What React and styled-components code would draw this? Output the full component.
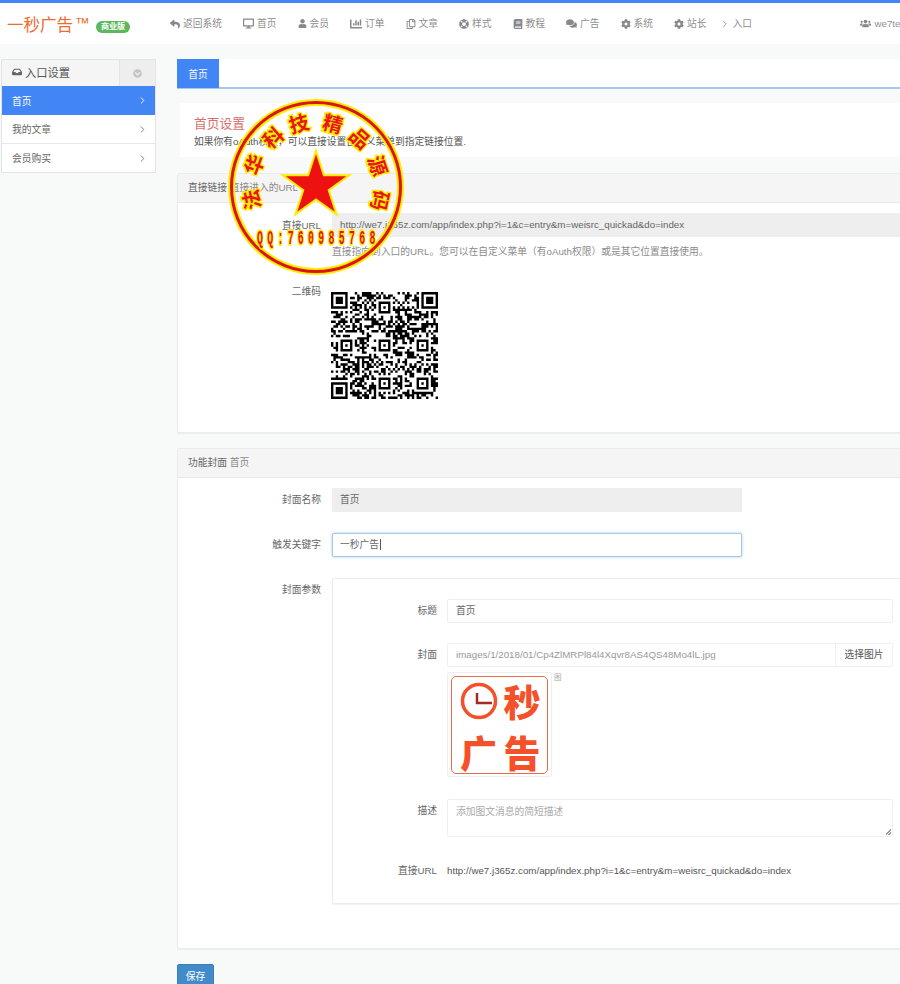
import React from 'react'
import styled, { createGlobalStyle } from 'styled-components'
import {
    FaReply, FaDesktop, FaUser, FaChartBar, FaRegCopy, FaLifeRing, FaBook, FaComments,
    FaCog, FaUsers, FaInbox, FaChevronCircleDown,
} from 'react-icons/fa'
import { FiChevronRight } from 'react-icons/fi'

const Global = createGlobalStyle`
    html, body { margin: 0; padding: 0; background: #f8f9f9; overflow: hidden; }
    body { font-family: "Liberation Sans", "Noto Sans CJK SC", sans-serif; font-size: 9.75px; color: #666; }
    * { box-sizing: border-box; }
`

const Page = styled.div`
    position: relative;
    width: 900px;
    height: 984px;
    overflow: hidden;
    border-top: 3px solid #4285f4;
`

const Header = styled.div`
    display: flex;
    align-items: center;
    width: 940px;
    height: 41px;
    padding: 0 26px 0 7px;
    background: #fff;
`

const Brand = styled.a`
    display: flex;
    align-items: center;
    width: 163px;
    color: #ee6a2c;
    font-size: 16.5px;
    sup { font-size: 15px; line-height: 1; margin: -3px 0 0 2px; }
`

const Badge = styled.span`
    margin: 7px 0 0 6px;
    padding: 1px 5px;
    border-radius: 7px;
    background: #5cb85c;
    color: #fff;
    font-size: 8px;
    font-weight: 700;
    line-height: 10px;
`

const NavItem = styled.a`
    display: flex;
    align-items: center;
    gap: 3px;
    margin-right: 21px;
    color: #8f8f8f;
    line-height: 14px;
    svg {
        color: #888;
        font-size: ${p => p.$icon || 10}px;
        margin-left: ${p => p.$pull || 0}px;
    }
`

const UserLink = styled(NavItem)`
    margin: 0 0 0 auto;
`

const Body = styled.div`
    display: flex;
    align-items: flex-start;
    width: 1000px;
    padding: 15px 0 0 1px;
`

const Side = styled.div`
    flex: none;
    width: 155px;
    margin-right: 21px;
    border: 1px solid #e4e4e4;
    border-top: 0;
    background: #fff;
`

const SideHead = styled.div`
    display: flex;
    height: 27px;
    background: #f5f5f5;
    border-top: 1px solid #e4e4e4;
`

const SideTitle = styled.div`
    flex: 1;
    display: flex;
    align-items: center;
    gap: 3px;
    padding: 0 0 2px 10px;
    color: #555;
    font-size: 11.25px;
    border-right: 1px solid #e4e4e4;
    svg { font-size: 10px; color: #666; }
`

const SideToggle = styled.div`
    display: flex;
    align-items: center;
    justify-content: center;
    width: 35px;
    background: #eee;
    color: #c4c4c4;
    font-size: 9px;
`

const SideItem = styled.a`
    display: flex;
    align-items: center;
    justify-content: space-between;
    height: ${p => (p.$last ? 28 : 29)}px;
    padding: 0 7px 0 10px;
    color: ${p => (p.$active ? '#fff' : '#666')};
    background: ${p => (p.$active ? '#4285f4' : '#fff')};
    border-bottom: ${p => (p.$last || p.$active ? '0' : '1px solid #e8e8e8')};
    svg { font-size: 11px; color: ${p => (p.$active ? '#fff' : '#777')}; }
`

const Main = styled.div`
    flex: 1;
    min-width: 0;
`

const Tabs = styled.div`
    display: flex;
    height: 30px;
    background: #fff;
    border-bottom: 2px solid #a9c7ea;
`

const Tab = styled.a`
    display: flex;
    align-items: center;
    justify-content: center;
    width: 42px;
    height: 29px;
    background: #4285f4;
    color: #fff;
`

const Notice = styled.div`
    height: 54px;
    margin: 14px 0 16px 3px;
    padding: 13px 14px 0;
    background: #fff;
`

const NoticeTitle = styled.div`
    color: #d9706c;
    font-size: 12.75px;
    line-height: 15px;
`

const NoticeText = styled.div`
    margin-top: 4px;
    color: #555;
    line-height: 14px;
`

const Panel = styled.div`
    height: ${p => p.$height}px;
    margin-bottom: 15px;
    background: #fff;
    border: 1px solid #ececec;
    border-radius: 2px;
    box-shadow: 0 1px 1px rgba(0, 0, 0, .05);
`

const PanelHead = styled.div`
    height: ${p => p.$height}px;
    padding-left: 10px;
    line-height: ${p => p.$height - 2}px;
    background: #f5f5f5;
    border-bottom: 1px solid #e8e8e8;
    color: #666;
    span { color: #888; }
`

const PanelBody = styled.div`
    padding-top: 10px;
`

const Row = styled.div`
    display: grid;
    grid-template-columns: ${p => p.$label || 143}px 1fr;
    column-gap: ${p => p.$gap || 11}px;
    margin-bottom: ${p => p.$after || 0}px;
`

const Label = styled.div`
    padding-top: ${p => p.$top || 5}px;
    text-align: right;
    color: #666;
    line-height: 14px;
`

const Plain = styled.div`
    padding-left: 8px;
    height: 24px;
    line-height: 24px;
    background: #eee;
    color: #666;
    width: ${p => (p.$width ? `${p.$width}px` : 'auto')};
`

const Help = styled.div`
    margin-top: 8px;
    color: #8c8c8c;
    line-height: 14px;
`

const QrWrap = styled.div`
    margin: 33px 0 0 -1px;
    line-height: 0;
`

const FocusField = styled(Plain)`
    background: #fff;
    border: 1px solid #a7c6ee;
    border-radius: 2px;
    box-shadow: 0 0 3px rgba(102, 175, 233, .6);
    line-height: 22px;
    padding-left: 7px;
`

const Caret = styled.span`
    display: inline-block;
    width: 1px;
    height: 11px;
    margin-left: 1px;
    vertical-align: -2px;
    background: #555;
`

const ParamBox = styled.div`
    height: 326px;
    padding: 20px 0 0;
    border: 1px solid #ececec;
    border-radius: 2px;
    box-shadow: 0 1px 1px rgba(0, 0, 0, .05);
`

const InnerCol = styled.div`
    width: 446px;
`

const Input = styled.div`
    height: 24px;
    padding-left: 8px;
    line-height: 22px;
    border: 1px solid #efefef;
    border-radius: 2px;
    color: #666;
`

const InputGroup = styled.div`
    display: flex;
    height: 24px;
    border: 1px solid #efefef;
    border-radius: 2px;
`

const GroupText = styled.div`
    flex: 1;
    padding-left: 8px;
    line-height: 22px;
    color: #999;
`

const GroupButton = styled.div`
    width: 57px;
    text-align: center;
    line-height: 22px;
    color: #555;
    border-left: 1px solid #efefef;
`

const ThumbRow = styled.div`
    display: flex;
    align-items: flex-start;
    margin-top: 5px;
`

const Thumb = styled.div`
    width: 105px;
    height: 105px;
    padding: 3px;
    border: 1px solid #efefef;
    border-radius: 2px;
    background: #fff;
`

const ThumbClose = styled.span`
    margin: 2px 0 0 2px;
    color: #aaa;
    font-size: 7.5px;
    line-height: 8px;
`

const Logo = styled.div`
    display: grid;
    grid-template-columns: 53px 34px;
    grid-template-rows: 48px 48px;
    row-gap: 3px;
    place-items: center;
    width: 97px;
    height: 98px;
    border: 1px solid #ec6a4c;
    border-radius: 5px;
    color: #f4512a;
    font-family: "Noto Sans CJK SC", sans-serif;
    font-size: 37px;
    font-weight: 900;
    line-height: 1;
`

const TextArea = styled.div`
    position: relative;
    height: 38px;
    padding: 5px 8px;
    border: 1px solid #efefef;
    border-radius: 2px;
    color: #aaa;
    line-height: 14px;
`

const Grip = styled.i`
    position: absolute;
    right: 1px;
    bottom: 1px;
    width: 6px;
    height: 6px;
    background: linear-gradient(135deg, transparent 50%, #999 50%, #999 60%, transparent 60%, transparent 75%, #999 75%, #999 85%, transparent 85%);
`

const LinkText = styled.div`
    padding-top: 5px;
    color: #555;
    line-height: 14px;
`

const SaveButton = styled.button`
    display: block;
    width: 37px;
    height: 24px;
    padding: 0;
    border: 1px solid #357ebd;
    border-radius: 2px;
    background: #428bca;
    color: #fff;
    font: inherit;
`

const SealSvg = styled.svg`
    position: absolute;
    left: 226px;
    top: 94px;
    pointer-events: none;
`

const SealChar = styled.text`
    font-family: "Noto Sans CJK SC", sans-serif;
    font-size: 20px;
    font-weight: 700;
    fill: #e8141c;
    stroke: #ffec00;
    stroke-width: 3px;
    paint-order: stroke;
    text-anchor: middle;
`

const SealNumber = styled.text`
    font-family: "Liberation Mono", monospace;
    font-size: 14px;
    font-weight: 700;
    fill: #e8141c;
    stroke: #ffec00;
    stroke-width: 2.5px;
    paint-order: stroke;
`

const navItems = [
    [FaReply, '返回系统'], [FaDesktop, '首页', 11], [FaUser, '会员', 9], [FaChartBar, '订单', 12],
    [FaRegCopy, '文章'], [FaLifeRing, '样式'], [FaBook, '教程'], [FaComments, '广告', 11],
    [FaCog, '系统'], [FaCog, '站长'], [FiChevronRight, '入口', 10, -8],
]

const sealChars = [['法', -101], ['华', -70], ['科', -41], ['技', -15], ['精', 15], ['品', 42], ['源', 71], ['码', 102]]

// 45 modules, same grid as a version 7 code
function qrPath() {
    const n = 45
    let seed = 20180117
    const grid = []
    for (let y = 0; y < n; y++) {
        grid.push([])
        for (let x = 0; x < n; x++) {
            seed = (seed * 1103515245 + 12345) & 0x7fffffff
            grid[y].push((seed >> 16) % 100 < 50)
        }
    }
    for (let i = 0; i < n; i++) {
        grid[6][i] = i % 2 === 0
        grid[i][6] = i % 2 === 0
    }
    const stamp = (cx, cy, r) => {
        for (let y = -r - 1; y <= r + 1; y++) {
            for (let x = -r - 1; x <= r + 1; x++) {
                const px = cx + x
                const py = cy + y
                if (px < 0 || py < 0 || px >= n || py >= n) continue
                const d = Math.max(Math.abs(x), Math.abs(y))
                grid[py][px] = d === r || (r === 3 ? d <= 1 : d === 0)
            }
        }
    }
    stamp(3, 3, 3)
    stamp(41, 3, 3)
    stamp(3, 41, 3)
    ;[[6, 22], [22, 6], [22, 22], [38, 22], [22, 38], [38, 38]].forEach(([x, y]) => stamp(x, y, 2))
    let d = ''
    grid.forEach((row, y) => row.forEach((on, x) => {
        if (on) d += `M${x} ${y}h1v1h-1z`
    }))
    return d
}

function QrCode() {
    return (
        <svg width="107" height="107" viewBox="0 0 45 45">
            <path d={qrPath()} fill="#000" />
        </svg>
    )
}

function starPoints(cx, cy, R) {
    const pts = []
    for (let i = 0; i < 10; i++) {
        const r = i % 2 ? R * 0.382 : R
        const a = (i * 36 - 90) * Math.PI / 180
        pts.push(`${cx + r * Math.cos(a)},${cy + r * Math.sin(a)}`)
    }
    return pts.join(' ')
}

function Seal() {
    const c = 90
    return (
        <SealSvg width="180" height="180" viewBox="0 0 180 180">
            <circle cx={c} cy={c} r="84.5" fill="none" stroke="#ffec00" strokeWidth="7" />
            <circle cx={c} cy={c} r="84.5" fill="none" stroke="#d9141c" strokeWidth="3" />
            <polygon points={starPoints(c, c - 1, 35)} fill="#ee1111" stroke="#ffec00" strokeWidth="2" />
            {sealChars.map(([ch, angle]) => {
                const a = (angle - 90) * Math.PI / 180
                const x = c + 65 * Math.cos(a)
                const y = c + 65 * Math.sin(a)
                return (
                    <SealChar key={ch} transform={`translate(${x} ${y}) rotate(${angle})`} y="7">
                        {ch}
                    </SealChar>
                )
            })}
            <SealNumber
                x="0"
                y="0"
                textLength="169"
                lengthAdjust="spacing"
                transform="translate(31 147) scale(.7 1.5)"
            >
                QQ:760985768
            </SealNumber>
        </SealSvg>
    )
}

function CoverLogo() {
    return (
        <Logo>
            <svg width="38" height="38" viewBox="0 0 38 38">
                <circle cx="19" cy="19" r="16.5" fill="none" stroke="#f4512a" strokeWidth="3.5" />
                <path d="M17 11v10h15" fill="none" stroke="#a52a20" strokeWidth="2.5" />
            </svg>
            <span>秒</span>
            <span>广</span>
            <span>告</span>
        </Logo>
    )
}

function App() {
    return (
        <Page>
            <Global />
            <Header>
                <Brand>
                    一秒广告<sup>™</sup>
                    <Badge>商业版</Badge>
                </Brand>
                {navItems.map(([Icon, text, size, pull]) => (
                    <NavItem key={text} $icon={size} $pull={pull}>
                        <Icon />
                        {text}
                    </NavItem>
                ))}
                <UserLink $icon={11}>
                    <FaUsers />
                    we7team
                </UserLink>
            </Header>
            <Body>
                <Side>
                    <SideHead>
                        <SideTitle>
                            <FaInbox />
                            入口设置
                        </SideTitle>
                        <SideToggle><FaChevronCircleDown /></SideToggle>
                    </SideHead>
                    <SideItem $active>首页<FiChevronRight /></SideItem>
                    <SideItem>我的文章<FiChevronRight /></SideItem>
                    <SideItem $last>会员购买<FiChevronRight /></SideItem>
                </Side>
                <Main>
                    <Tabs><Tab>首页</Tab></Tabs>
                    <Notice>
                        <NoticeTitle>首页设置</NoticeTitle>
                        <NoticeText>如果你有oAuth权限，可以直接设置自定义菜单到指定链接位置.</NoticeText>
                    </Notice>
                    <Panel $height={260}>
                        <PanelHead $height={29}>直接链接 <span>直接进入的URL</span></PanelHead>
                        <PanelBody>
                            <Row>
                                <Label $top={6}>直接URL</Label>
                                <div>
                                    <Plain>http://we7.j365z.com/app/index.php?i=1&amp;c=entry&amp;m=weisrc_quickad&amp;do=index</Plain>
                                    <Help>直接指向到入口的URL。您可以在自定义菜单（有oAuth权限）或是其它位置直接使用。</Help>
                                </div>
                            </Row>
                            <Row>
                                <Label $top={26}>二维码</Label>
                                <QrWrap>
                                    <QrCode />
                                </QrWrap>
                            </Row>
                        </PanelBody>
                    </Panel>
                    <Panel $height={501}>
                        <PanelHead $height={29}>功能封面 <span>首页</span></PanelHead>
                        <PanelBody>
                            <Row $after={21}>
                                <Label>封面名称</Label>
                                <Plain $width={410}>首页</Plain>
                            </Row>
                            <Row $after={21}>
                                <Label>触发关键字</Label>
                                <FocusField $width={410}>一秒广告<Caret /></FocusField>
                            </Row>
                            <Row>
                                <Label>封面参数</Label>
                                <ParamBox>
                                    <Row $label={104} $gap={10} $after={20}>
                                        <Label>标题</Label>
                                        <InnerCol><Input>首页</Input></InnerCol>
                                    </Row>
                                    <Row $label={104} $gap={10} $after={22}>
                                        <Label>封面</Label>
                                        <InnerCol>
                                            <InputGroup>
                                                <GroupText>images/1/2018/01/Cp4ZlMRPl84l4Xqvr8AS4QS48Mo4lL.jpg</GroupText>
                                                <GroupButton>选择图片</GroupButton>
                                            </InputGroup>
                                            <ThumbRow>
                                                <Thumb><CoverLogo /></Thumb>
                                                <ThumbClose>图</ThumbClose>
                                            </ThumbRow>
                                        </InnerCol>
                                    </Row>
                                    <Row $label={104} $gap={10} $after={22}>
                                        <Label>描述</Label>
                                        <InnerCol>
                                            <TextArea>添加图文消息的简短描述<Grip /></TextArea>
                                        </InnerCol>
                                    </Row>
                                    <Row $label={104} $gap={10}>
                                        <Label>直接URL</Label>
                                        <LinkText>http://we7.j365z.com/app/index.php?i=1&amp;c=entry&amp;m=weisrc_quickad&amp;do=index</LinkText>
                                    </Row>
                                </ParamBox>
                            </Row>
                        </PanelBody>
                    </Panel>
                    <SaveButton>保存</SaveButton>
                </Main>
            </Body>
            <Seal />
        </Page>
    )
}

export default App
